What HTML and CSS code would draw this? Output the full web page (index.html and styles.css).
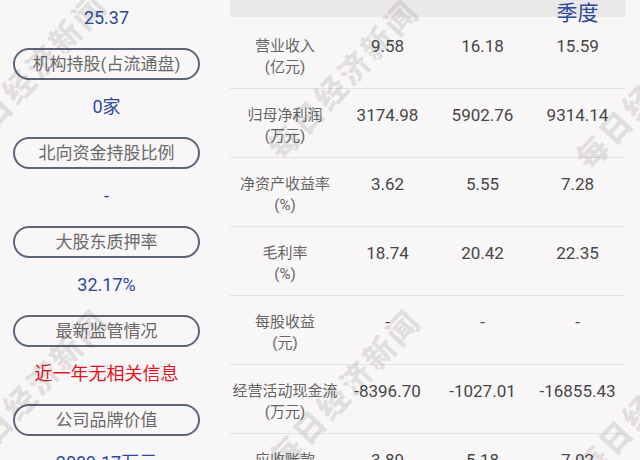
FILE: index.html
```html
<!DOCTYPE html>
<html lang="zh">
<head>
<meta charset="utf-8">
<link rel="stylesheet" href="styles.css">
</head>
<body>
<div class="page">
  <div class="side">
    <div class="val">25.37</div>
    <div class="pill">机构持股(占流通盘)</div>
    <div class="val">0家</div>
    <div class="pill">北向资金持股比例</div>
    <div class="val">-</div>
    <div class="pill">大股东质押率</div>
    <div class="val">32.17%</div>
    <div class="pill">最新监管情况</div>
    <div class="val red">近一年无相关信息</div>
    <div class="pill">公司品牌价值</div>
    <div class="val">2089.17万元</div>
  </div>
  <div class="table">
    <div class="head">
      <div class="hc"></div><div class="hc"></div><div class="hc"></div><div class="hc">季度</div>
    </div>
    <div class="row"><div class="lab">营业收入<br>(亿元)</div><div class="num">9.58</div><div class="num">16.18</div><div class="num">15.59</div></div>
    <div class="row"><div class="lab">归母净利润<br>(万元)</div><div class="num">3174.98</div><div class="num">5902.76</div><div class="num">9314.14</div></div>
    <div class="row"><div class="lab">净资产收益率<br>(%)</div><div class="num">3.62</div><div class="num">5.55</div><div class="num">7.28</div></div>
    <div class="row"><div class="lab">毛利率<br>(%)</div><div class="num">18.74</div><div class="num">20.42</div><div class="num">22.35</div></div>
    <div class="row"><div class="lab">每股收益<br>(元)</div><div class="num">-</div><div class="num">-</div><div class="num">-</div></div>
    <div class="row"><div class="lab">经营活动现金流<br>(万元)</div><div class="num">-8396.70</div><div class="num">-1027.01</div><div class="num">-16855.43</div></div>
    <div class="row"><div class="lab">应收账款<br>(亿元)</div><div class="num">3.89</div><div class="num">5.18</div><div class="num">7.02</div></div>
  </div>
  <div class="marks">
    <span class="wm wm1">每日经济新闻</span>
    <span class="wm wm2">每日经济新闻</span>
    <span class="wm wm3">每日经济新闻</span>
    <span class="wm wm4">每日经济新闻</span>
    <span class="wm wm5">每日经济新闻</span>
    <span class="wm wm6">每日经济新闻</span>
  </div>
</div>
</body>
</html>
```
FILE: styles.css
```css
html, body {
  margin: 0;
  padding: 0;
  background: #f9f6f7;
}
body {
  font-family: Roboto, "Noto Sans CJK SC", sans-serif;
  width: 640px;
  height: 460px;
  overflow: hidden;
}
.page {
  position: relative;
  display: flex;
  gap: 17px;
  width: 640px;
  height: 460px;
  overflow: hidden;
}
.side {
  width: 187px;
  padding: 0 13px;
  display: flex;
  flex-direction: column;
  flex: none;
}
.val {
  height: 36px;
  line-height: 36px;
  text-align: center;
  font-size: 18px;
  color: #2c4b9a;
  margin-bottom: 12px;
}
.val.red {
  color: #e5141d;
}
.pill {
  height: 32px;
  box-sizing: border-box;
  border: 2px solid #5b6678;
  border-radius: 16px;
  text-align: center;
  line-height: 28px;
  font-size: 17px;
  color: #6a6a6a;
  margin-bottom: 9px;
}
.table {
  width: 395px;
  flex: none;
}
.head {
  display: grid;
  grid-template-columns: 110px 95px 95px 95px;
  height: 17px;
  background: #ebe8e9;
  margin-bottom: 3px;
}
.hc {
  text-align: center;
  font-size: 21px;
  line-height: 22px;
  padding-top: 2px;
  color: #2c4b9a;
  white-space: nowrap;
}
.row {
  display: grid;
  grid-template-columns: 110px 95px 95px 95px;
  height: 69px;
  box-sizing: border-box;
  padding-top: 16px;
  border-bottom: 1px solid #e3e1e2;
}
.lab {
  text-align: center;
  font-size: 15px;
  line-height: 21px;
  color: #666;
  white-space: nowrap;
}
.num {
  text-align: center;
  font-size: 17px;
  line-height: 21px;
  color: #474747;
  white-space: nowrap;
}
.marks {
  position: absolute;
  inset: 0;
  pointer-events: none;
  overflow: hidden;
}
.wm {
  position: absolute;
  font-family: "Noto Sans CJK SC", sans-serif;
  font-weight: 900;
  font-size: 31px;
  letter-spacing: 3px;
  color: rgba(60, 60, 60, 0.12);
  white-space: nowrap;
  transform: translate(-50%, -50%) rotate(-47deg);
}
.wm1 { left: 30px; top: 72px; }
.wm2 { left: 342px; top: 78px; }
.wm3 { left: 650px; top: 88px; }
.wm4 { left: 31px; top: 388px; }
.wm5 { left: 344px; top: 388px; }
.wm6 { left: 650px; top: 398px; }
```
